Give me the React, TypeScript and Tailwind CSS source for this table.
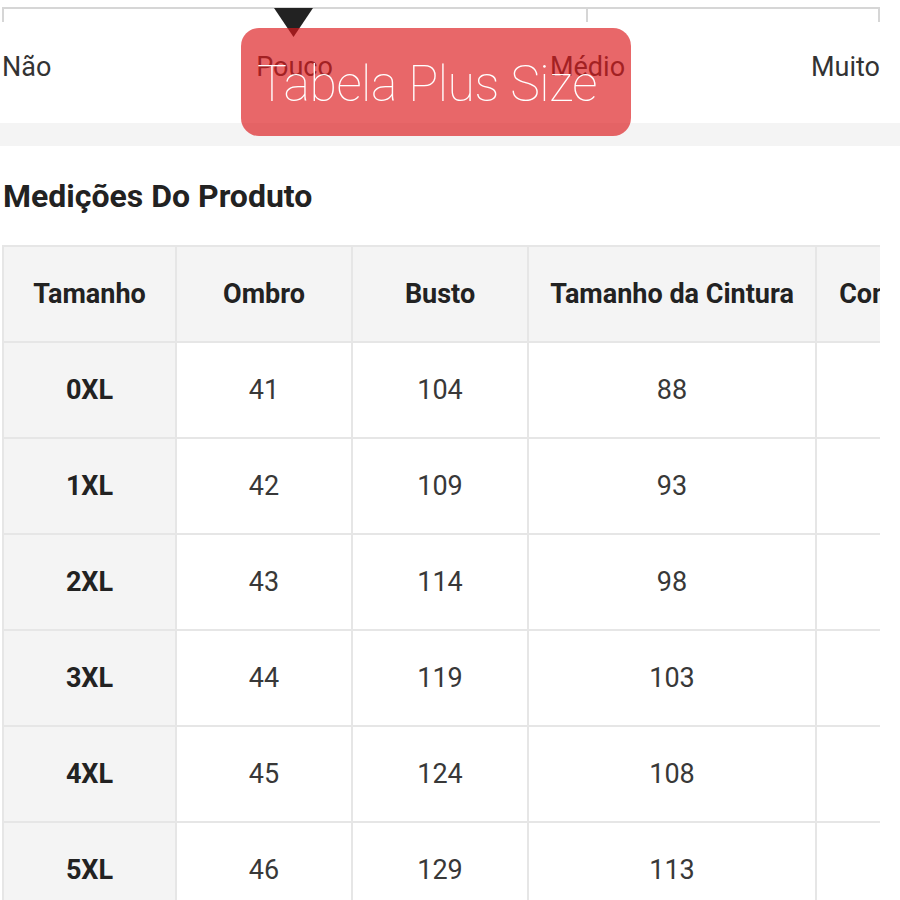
const rows = [
  { size: "0XL", ombro: 41, busto: 104, cintura: 88, comp: 66 },
  { size: "1XL", ombro: 42, busto: 109, cintura: 93, comp: 67 },
  { size: "2XL", ombro: 43, busto: 114, cintura: 98, comp: 68 },
  { size: "3XL", ombro: 44, busto: 119, cintura: 103, comp: 69 },
  { size: "4XL", ombro: 45, busto: 124, cintura: 108, comp: 70 },
  { size: "5XL", ombro: 46, busto: 129, cintura: 113, comp: 71 },
];

const cols = ["w-[173px]", "w-[176px]", "w-[176px]", "w-[288px]", "w-[212px]"];

const App = () => {
  return (
    <div className="relative w-[900px] h-[900px] overflow-hidden bg-white font-['Roboto',sans-serif] text-[#333]">

      {/* Elastic scale */}
      <div className="bg-white px-[2px] pt-[7px] h-[123px]">
        <div className="flex w-[878px]">
          <div className="w-[293px] h-[15px] border-t-2 border-l-2 border-r-2 border-[#d6d6d6]" />
          <div className="w-[293px] h-[15px] border-t-2 border-r-2 border-[#d6d6d6]" />
          <div className="w-[292px] h-[15px] border-t-2 border-r-2 border-[#d6d6d6]" />
        </div>
        <div className="grid grid-cols-[146px_293px_293px_146px] w-[878px] mt-[29px] text-[27px] leading-[32px]">
          <span className="text-left">Não</span>
          <span className="text-center">Pouco</span>
          <span className="text-center">Médio</span>
          <span className="text-right">Muito</span>
        </div>
      </div>
      <div className="h-[23px] bg-[#f4f4f4]" />

      {/* Pointer */}
      <svg className="absolute left-[274px] top-[8px]" width="39" height="29" viewBox="0 0 39 29">
        <polygon points="0,0 39,0 19.5,29" fill="#222" />
      </svg>

      {/* Overlay label */}
      <div className="absolute left-[241px] top-[28px] w-[390px] h-[108px] rounded-[18px] bg-[rgba(220,24,28,0.66)] flex items-center pl-[16px]">
        <span className="text-white text-[50px] font-thin leading-none mt-[4px] tracking-[-0.5px]">Tabela Plus Size</span>
      </div>

      {/* Title */}
      <div className="h-[99px] flex items-center px-[3px]">
        <h2 className="text-[32px] font-bold text-[#222]">Medições Do Produto</h2>
      </div>

      {/* Table */}
      <div className="ml-[2px] w-[878px] overflow-hidden">
        <div className="w-max border-t-2 border-l-2 border-[#e6e6e6]">
          <div className="flex bg-[#f4f4f4]">
            {["Tamanho", "Ombro", "Busto", "Tamanho da Cintura", "Comprimento"].map((h, i) => (
              <div
                key={h}
                className={`${cols[i]} h-[96px] shrink-0 flex items-center justify-center border-r-2 border-b-2 border-[#e6e6e6] text-[27px] font-bold text-[#222] whitespace-nowrap`}
              >
                {h}
              </div>
            ))}
          </div>
          {rows.map((r) => (
            <div key={r.size} className="flex">
              <div className="w-[173px] h-[96px] shrink-0 flex items-center justify-center border-r-2 border-b-2 border-[#e6e6e6] bg-[#f4f4f4] text-[27px] font-bold text-[#222]">
                {r.size}
              </div>
              {[r.ombro, r.busto, r.cintura, r.comp].map((v, i) => (
                <div
                  key={i}
                  className={`${cols[i + 1]} h-[96px] shrink-0 flex items-center justify-center border-r-2 border-b-2 border-[#e6e6e6] bg-white text-[27px] text-[#383838]`}
                >
                  {v}
                </div>
              ))}
            </div>
          ))}
        </div>
      </div>

    </div>
  );
};

export default App;
